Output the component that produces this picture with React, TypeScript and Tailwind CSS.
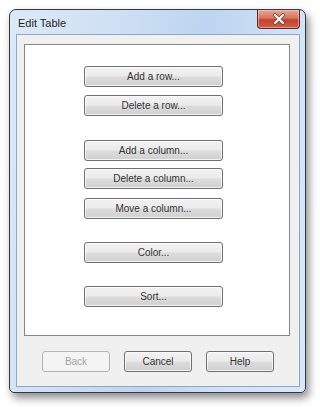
import React from "react"

const font = { fontFamily: '"Liberation Sans", Arial, sans-serif' }

function Btn({ label, disabled = false, className = "" }: { label: string; disabled?: boolean; className?: string }) {
  if (disabled) {
    return (
      <div
        className={`flex h-[21px] items-center justify-center rounded-[3px] border border-[#b5b5b5] bg-[#f4f4f4] text-[10px] text-[#a3a3a3] ${className}`}
      >
        {label}
      </div>
    )
  }
  return (
    <div
      className={`flex h-[21px] items-center justify-center rounded-[3px] border border-[#707070] bg-[linear-gradient(to_bottom,#f2f2f2_0%,#ebebeb_48%,#dddddd_52%,#cfcfcf_100%)] text-[10px] text-[#333] shadow-[inset_0_0_0_1px_rgba(255,255,255,0.7)] ${className}`}
    >
      {label}
    </div>
  )
}

export default function App() {
  return (
    <div className="h-[407px] w-[320px] bg-white pl-[9px] pt-[9px]" style={font}>
      {/* Window frame */}
      <div className="flex h-[384px] w-[297px] flex-col rounded-t-[7px] rounded-b-[5px] border border-[#2f3a46] bg-[linear-gradient(100deg,#dce9f7_0%,#cfe0f3_30%,#bcd5f0_55%,#d3e3f5_80%,#dae7f6_100%)] shadow-[3px_5px_9px_rgba(0,0,0,0.45)]">
        {/* Title bar */}
        <div className="flex h-[24px] items-start">
          <span className="ml-[8px] mt-[7px] text-[11px] leading-[12px] text-[#1e1e1e]">Edit Table</span>
          <div className="ml-auto mr-[5px] flex h-[19px] w-[43px] items-center justify-center rounded-b-[4px] border border-t-0 border-[#5a2a24] bg-[linear-gradient(to_bottom,#e8a795_0%,#d7735f_45%,#c2412f_55%,#d0604a_100%)] shadow-[inset_0_0_0_1px_rgba(255,210,200,0.5)]">
            <svg width="14" height="12" viewBox="0 0 14 12">
              <path d="M3 2 L11 10 M11 2 L3 10" stroke="#6b4a44" strokeWidth="3.6" strokeLinecap="round" />
              <path d="M3 2 L11 10 M11 2 L3 10" stroke="#ffffff" strokeWidth="2" strokeLinecap="round" />
            </svg>
          </div>
        </div>
        {/* Client area */}
        <div className="mx-[5px] mb-[5px] ml-[6px] flex flex-1 flex-col border border-[#8fa7c4] bg-[#f0f0f0]">
          <div className="ml-[7px] mr-[9px] mt-[9px] flex h-[292px] flex-col border border-[#828790] bg-white pl-[59px]">
            <Btn label="Add a row..." className="mt-[21px] w-[139px]" />
            <Btn label="Delete a row..." className="mt-[8px] w-[139px]" />
            <Btn label="Add a column..." className="mt-[24px] w-[139px]" />
            <Btn label="Delete a column..." className="mt-[7px] w-[139px]" />
            <Btn label="Move a column..." className="mt-[9px] w-[139px]" />
            <Btn label="Color..." className="mt-[23px] w-[139px]" />
            <Btn label="Sort..." className="mt-[23px] w-[139px]" />
          </div>
          <div className="ml-[25px] mt-[15px] flex gap-[14px]">
            <Btn label="Back" disabled className="w-[68px]" />
            <Btn label="Cancel" className="w-[68px]" />
            <Btn label="Help" className="w-[68px]" />
          </div>
        </div>
      </div>
    </div>
  )
}
